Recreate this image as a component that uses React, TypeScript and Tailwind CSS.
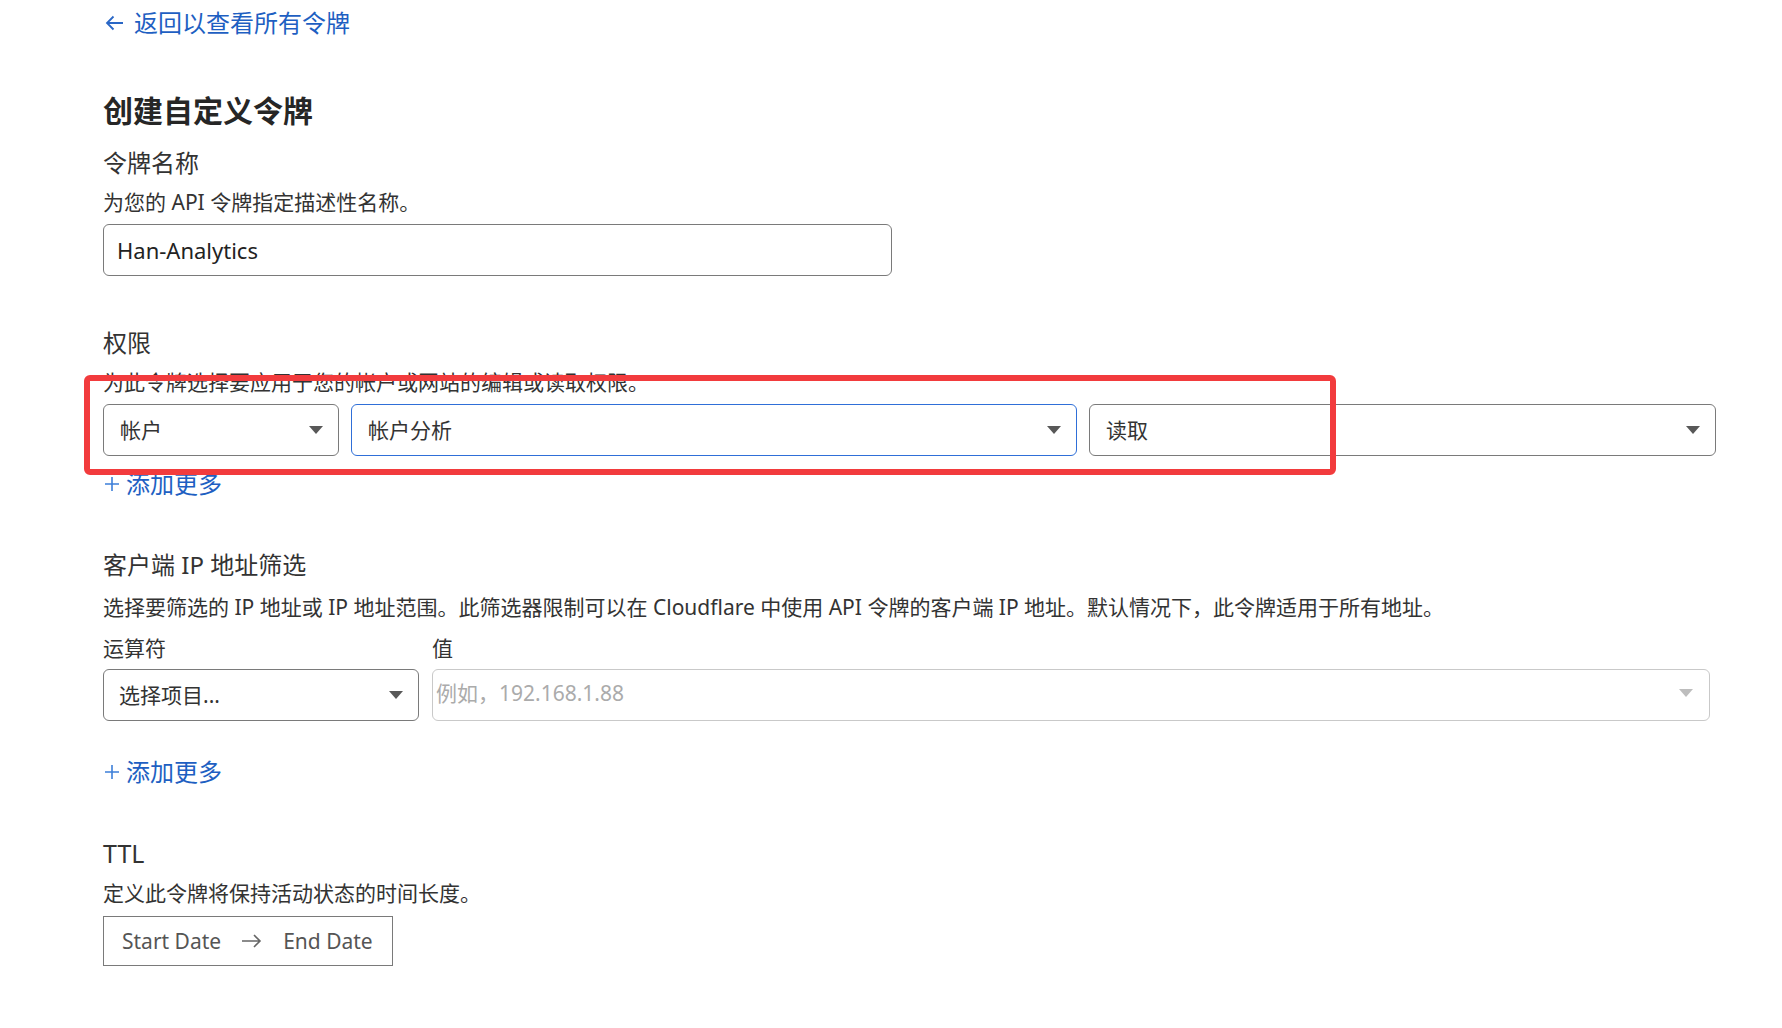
import React from "react";

const font = "font-['Noto_Sans','Noto_Sans_CJK_SC',sans-serif]";

function Caret({ light = false }: { light?: boolean }) {
  return (
    <svg width="14" height="8" viewBox="0 0 14 8" className="shrink-0">
      <path d="M0 0h14L7 8z" fill={light ? "#bdbdbd" : "#585858"} />
    </svg>
  );
}

function Select({
  value,
  className,
  focused = false,
}: {
  value: string;
  className: string;
  focused?: boolean;
}) {
  return (
    <div
      className={`flex h-[52px] items-center justify-between rounded-[6px] border bg-white pl-[16px] pr-[15px] ${
        focused ? "border-[#2f6fd8]" : "border-[#7a7a7a]"
      } ${className}`}
    >
      <span className="text-[21px] leading-none text-[#333]">{value}</span>
      <Caret />
    </div>
  );
}

function AddMore({ className }: { className: string }) {
  return (
    <button
      type="button"
      className={`flex h-[32px] items-center gap-[7px] pl-[2px] text-[24px] leading-[32px] text-[#1e5fc2] ${className}`}
    >
      <svg width="14" height="14" viewBox="0 0 14 14">
        <path d="M7 0v14M0 7h14" stroke="#3d7fd9" strokeWidth="1.6" />
      </svg>
      <span>添加更多</span>
    </button>
  );
}

export default function App() {
  return (
    <div className={`relative min-h-screen w-full bg-white ${font}`}>
      <div className="flex flex-col items-start pl-[103px]">
        <a className="flex h-[46px] items-center gap-[10px] pl-[2px] text-[24px] leading-[46px] text-[#1e5fc2]">
          <svg width="19" height="16" viewBox="0 0 19 16" fill="none">
            <path
              d="M18 8H2M8.5 1.5 2 8l6.5 6.5"
              stroke="#2a67c6"
              strokeWidth="1.8"
            />
          </svg>
          <span>返回以查看所有令牌</span>
        </a>

        <h1 className="mt-[45px] text-[30px] font-bold leading-[40px] text-[#262626]">
          创建自定义令牌
        </h1>

        <h2 className="mt-[16px] text-[24px] leading-[32px] text-[#333]">令牌名称</h2>
        <p className="mt-[9px] text-[21px] leading-[28px] text-[#333]">
          为您的 API 令牌指定描述性名称。
        </p>
        <div className="mt-[8px] flex h-[52px] w-[789px] items-center rounded-[6px] border border-[#7a7a7a] pl-[13px]">
          <span className="text-[22px] leading-none text-[#222]">Han-Analytics</span>
        </div>

        <h2 className="mt-[51px] text-[24px] leading-[32px] text-[#333]">权限</h2>
        <p className="mt-[9px] text-[21px] leading-[28px] text-[#333]">
          为此令牌选择要应用于您的帐户或网站的编辑或读取权限。
        </p>
        <div className="mt-[8px] flex gap-[12px]">
          <Select value="帐户" className="w-[236px]" />
          <Select value="帐户分析" className="w-[726px]" focused />
          <Select value="读取" className="w-[627px]" />
        </div>
        <AddMore className="mt-[12px]" />

        <h2 className="mt-[49px] text-[24px] leading-[32px] text-[#333]">
          客户端 IP 地址筛选
        </h2>
        <p className="mt-[12px] text-[21px] leading-[28px] text-[#333]">
          选择要筛选的 IP 地址或 IP 地址范围。此筛选器限制可以在 Cloudflare 中使用 API
          令牌的客户端 IP 地址。默认情况下，此令牌适用于所有地址。
        </p>
        <div className="mt-[13px] flex gap-[13px]">
          <div className="flex w-[316px] flex-col">
            <span className="text-[21px] leading-[28px] text-[#333]">运算符</span>
            <div className="mt-[7px] flex h-[52px] items-center justify-between rounded-[6px] border border-[#7a7a7a] pl-[15px] pr-[15px]">
              <span className="text-[21px] leading-none text-[#333]">选择项目...</span>
              <Caret />
            </div>
          </div>
          <div className="flex w-[1278px] flex-col">
            <span className="text-[21px] leading-[28px] text-[#333]">值</span>
            <div className="mt-[7px] flex h-[52px] items-center justify-between rounded-[6px] border border-[#c9c9c9] pb-[4px] pl-[3px] pr-[16px]">
              <span className="text-[21px] leading-none text-[#ababab]">例如，192.168.1.88</span>
              <Caret light />
            </div>
          </div>
        </div>
        <AddMore className="mt-[35px]" />

        <h2 className="mt-[49px] text-[25px] leading-[32px] text-[#333]">TTL</h2>
        <p className="mt-[10px] text-[21px] leading-[28px] text-[#333]">
          定义此令牌将保持活动状态的时间长度。
        </p>
        <div className="mt-[9px] flex h-[50px] w-[290px] items-center gap-[21px] border border-[#7a7a7a] pl-[18px] text-[21px] leading-none text-[#555]">
          <span>Start Date</span>
          <svg width="20" height="14" viewBox="0 0 20 14" fill="none">
            <path d="M0 7h18M12 1l6 6-6 6" stroke="#666" strokeWidth="1.6" />
          </svg>
          <span>End Date</span>
        </div>
      </div>

      <div className="pointer-events-none absolute left-[84px] top-[375px] h-[100px] w-[1252px] rounded-[6px] border-[6px] border-[#f23b3d]" />
    </div>
  );
}
